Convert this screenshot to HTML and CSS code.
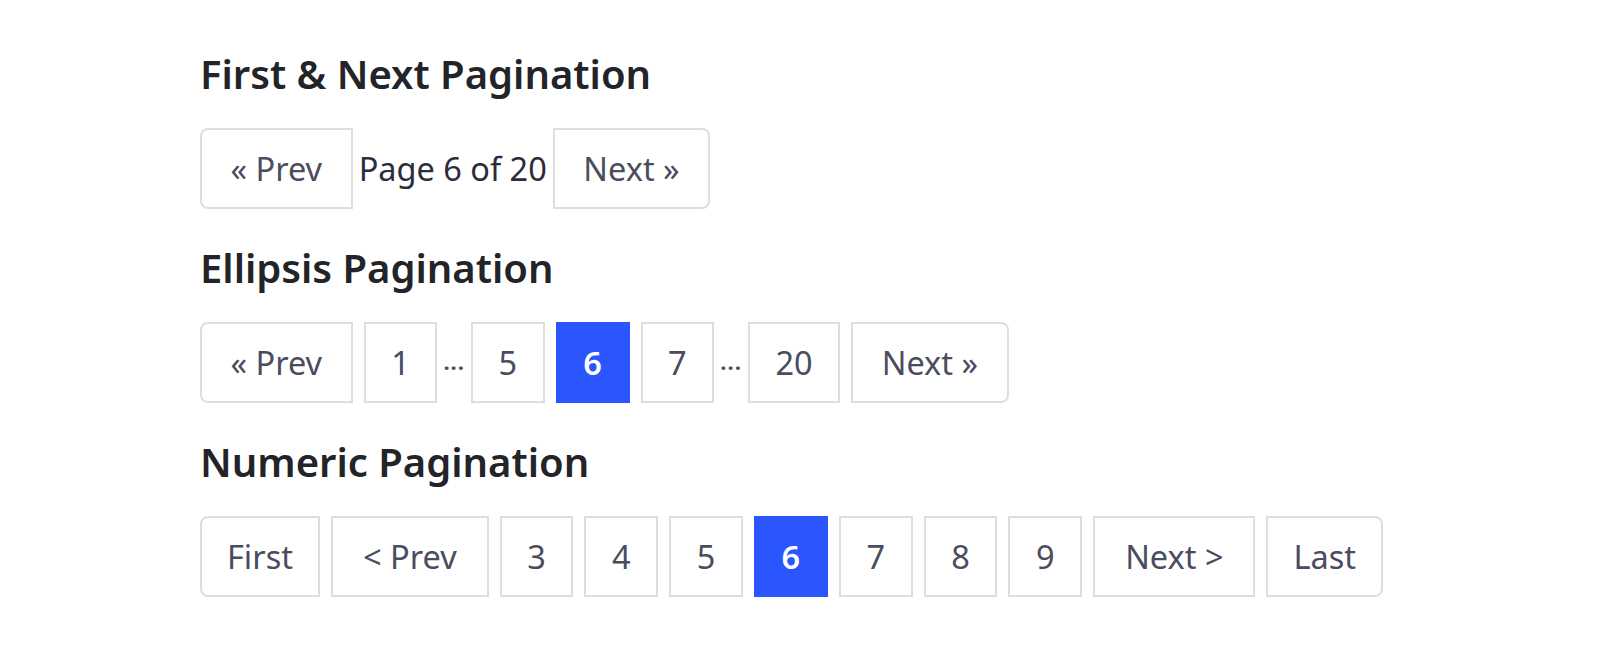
FILE: index.html
```html
<!DOCTYPE html>
<html lang="en">
<head>
<meta charset="utf-8">
<title>Pagination</title>
<link rel="stylesheet" href="styles.css">
</head>
<body>
<main class="page">
  <section class="block">
    <h2 class="title">First &amp; Next Pagination</h2>
    <nav class="pager">
      <a class="item first arrow">« Prev</a>
      <span class="info">Page 6 of 20</span>
      <a class="item last arrow">Next »</a>
    </nav>
  </section>
  <section class="block">
    <h2 class="title">Ellipsis Pagination</h2>
    <nav class="pager">
      <a class="item first arrow">« Prev</a>
      <a class="item">1</a>
      <span class="dots">...</span>
      <a class="item">5</a>
      <a class="item active">6</a>
      <a class="item">7</a>
      <span class="dots">...</span>
      <a class="item">20</a>
      <a class="item last arrow">Next »</a>
    </nav>
  </section>
  <section class="block">
    <h2 class="title">Numeric Pagination</h2>
    <nav class="pager">
      <a class="item first word">First</a>
      <a class="item step">&lt; Prev</a>
      <a class="item">3</a>
      <a class="item">4</a>
      <a class="item">5</a>
      <a class="item active">6</a>
      <a class="item">7</a>
      <a class="item">8</a>
      <a class="item">9</a>
      <a class="item step">Next &gt;</a>
      <a class="item last word">Last</a>
    </nav>
  </section>
</main>
</body>
</html>
```
FILE: styles.css
```css
html, body {
  margin: 0;
  padding: 0;
  background: #ffffff;
}
body {
  font-family: "Noto Sans", "Open Sans", sans-serif;
  color: #212529;
}
.page {
  padding: 49px 0 0 200px;
}
.title {
  margin: 0;
  height: 50px;
  font-size: 40px;
  font-weight: 600;
  line-height: 50px;
  color: #222428;
}
.pager {
  display: flex;
  align-items: center;
  margin: 29px 0 34px -5.5px;
}
.item {
  box-sizing: border-box;
  height: 81px;
  padding: 0 25.6px;
  margin: 0 5.5px;
  display: flex;
  align-items: center;
  justify-content: center;
  border: 2px solid #dedede;
  background: #fff;
  color: #4a4d5e;
  font-size: 32.5px;
  text-decoration: none;
}
.pager-ellipsis .item {
  padding: 0 26px;
}
.item.word {
  padding: 0 25px;
}
.item.arrow {
  padding: 0 28.5px;
}
.item.step {
  padding: 0 30px;
}
.item.first {
  border-radius: 8px 0 0 8px;
}
.item.last {
  border-radius: 0 8px 8px 0;
}
.item.active {
  background: #2b55ff;
  border-color: #2b55ff;
  color: #ffffff;
  font-weight: 600;
}
.info {
  font-size: 32.5px;
  color: #2c2c3a;
  margin: 0 0.5px;
}
.dots {
  font-size: 22px;
  line-height: 1;
  font-weight: 700;
  color: #4a4d5e;
  letter-spacing: 1px;
  padding: 0 0.5px 4px;
}
```
